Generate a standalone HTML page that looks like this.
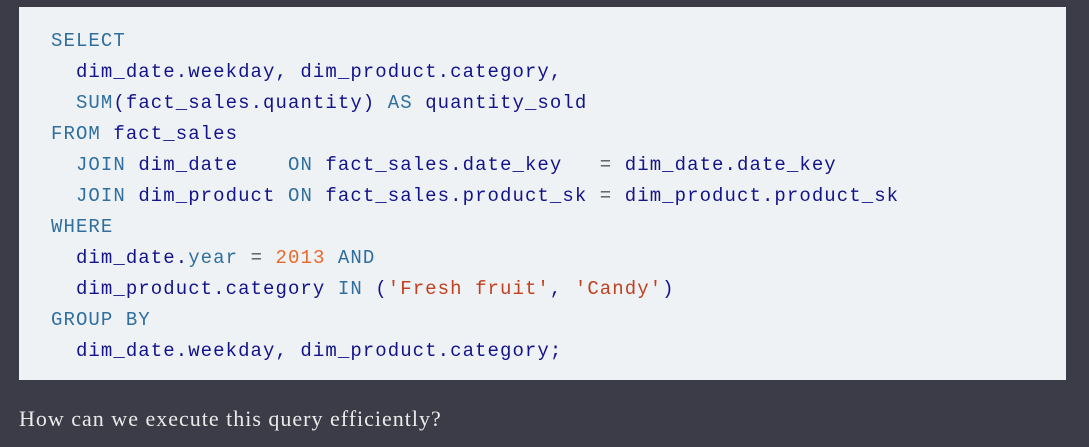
<!DOCTYPE html>
<html><head><meta charset="utf-8"><style>
html,body{margin:0;padding:0;background:#3c3c48;width:1089px;height:447px;overflow:hidden}
.box{position:absolute;left:19px;top:7px;width:1047px;height:373px;background:#eff2f5}
pre{position:absolute;left:32px;top:19px;margin:0;font-family:"Liberation Mono",monospace;font-size:19px;letter-spacing:1.07px;line-height:31px;color:#13138a}
.k{color:#2f6f9f}.n{color:#e8692a}.s{color:#c0401f}.o{color:#555}
p{position:absolute;left:19px;top:406px;margin:0;font-family:"Liberation Serif",serif;font-size:22px;letter-spacing:1px;color:#eaeaea}
</style></head><body>
<div class="box"><pre><span class="k">SELECT</span>
  dim_date.weekday, dim_product.category,
  <span class="k">SUM</span>(fact_sales.quantity) <span class="k">AS</span> quantity_sold
<span class="k">FROM</span> fact_sales
  <span class="k">JOIN</span> dim_date    <span class="k">ON</span> fact_sales.date_key   <span class="o">=</span> dim_date.date_key
  <span class="k">JOIN</span> dim_product <span class="k">ON</span> fact_sales.product_sk <span class="o">=</span> dim_product.product_sk
<span class="k">WHERE</span>
  dim_date.<span class="k">year</span> <span class="o">=</span> <span class="n">2013</span> <span class="k">AND</span>
  dim_product.category <span class="k">IN</span> (<span class="s">'Fresh fruit'</span>, <span class="s">'Candy'</span>)
<span class="k">GROUP BY</span>
  dim_date.weekday, dim_product.category;</pre></div>
<p>How can we execute this query efficiently?</p>
</body></html>
